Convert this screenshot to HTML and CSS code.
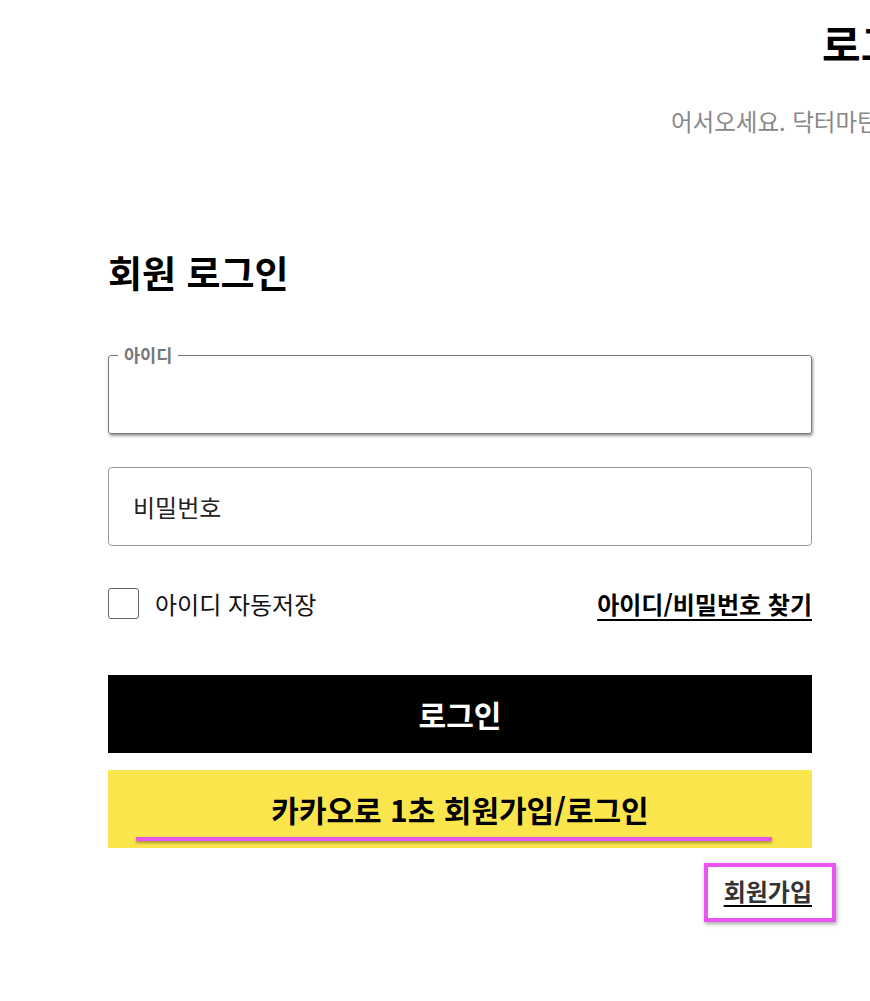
FILE: index.html
```html
<!DOCTYPE html>
<html lang="ko">
<head>
<meta charset="utf-8">
<title>로그인</title>
<link rel="stylesheet" href="styles.css">
</head>
<body>
<div class="viewport">
  <header class="page-head">
    <h1 class="page-title">로그인</h1>
    <p class="page-sub">어서오세요. 닥터마틴 온라인 스토어입니다.</p>
  </header>

  <main class="login">
    <h2 class="login-title">회원 로그인</h2>

    <fieldset class="field field-active">
      <legend class="field-legend">아이디</legend>
      <input class="field-input" type="text" aria-label="아이디">
    </fieldset>

    <div class="field field-plain">
      <span class="field-placeholder">비밀번호</span>
    </div>

    <div class="options">
      <label class="remember">
        <span class="checkbox"></span>
        <span class="remember-text">아이디 자동저장</span>
      </label>
      <a class="find-link" href="#">아이디/비밀번호 찾기</a>
    </div>

    <button class="btn btn-login" type="button">로그인</button>
    <button class="btn btn-kakao" type="button">카카오로 1초 회원가입/로그인<span class="mark-line"></span></button>

    <div class="join-row">
      <a class="join-link" href="#">회원가입<span class="mark-box"></span></a>
    </div>
  </main>
</div>
</body>
</html>
```

FILE: styles.css
```css
html, body {
  margin: 0;
  padding: 0;
  background: #fff;
  overflow: hidden;
}
body {
  font-family: "Noto Sans CJK KR", "Noto Sans", sans-serif;
  color: #000;
}
.viewport {
  width: 870px;
  height: 1001px;
  overflow: hidden;
}
.page-head {
  width: 1764px;
  text-align: center;
  padding-top: 14px;
}
.page-title {
  margin: 0;
  font-size: 42px;
  font-weight: 700;
  line-height: 58px;
  padding-right: 4px;
}
.page-sub {
  margin: 33px 0 0;
  font-size: 23.5px;
  line-height: 32px;
  color: #888;
}
.login {
  width: 704px;
  margin: 0 0 0 108px;
  padding-top: 109px;
}
.login-title {
  margin: 0 0 48px;
  font-size: 37px;
  font-weight: 700;
  line-height: 52px;
}
.field {
  box-sizing: border-box;
  width: 704px;
}
.field-active {
  margin: 0;
  padding: 0;
  min-width: 0;
  height: 88px;
  border: 1px solid #777;
  border-radius: 3px;
  box-shadow: 1px 2px 3px rgba(0, 0, 0, 0.4);
}
.field-legend {
  margin-left: 9px;
  padding: 0 6px;
  font-size: 17.5px;
  font-weight: 700;
  line-height: 18px;
  color: #777;
}
.field-input {
  display: block;
  width: 100%;
  height: 62px;
  border: 0;
  outline: 0;
  background: transparent;
  box-sizing: border-box;
}
.field-plain {
  margin-top: 33px;
  height: 79px;
  border: 1px solid #999;
  border-radius: 4px;
  display: flex;
  align-items: center;
  padding-left: 24px;
}
.field-placeholder {
  font-size: 24px;
  color: #222;
}
.options {
  margin-top: 41px;
  height: 32px;
  display: flex;
  align-items: center;
  justify-content: space-between;
}
.remember {
  display: flex;
  align-items: center;
  gap: 16px;
}
.checkbox {
  box-sizing: border-box;
  width: 31px;
  height: 31px;
  border: 1.5px solid #666;
  border-radius: 3px;
}
.remember-text {
  font-size: 24px;
  color: #111;
}
.find-link {
  font-size: 24px;
  font-weight: 700;
  color: #000;
  text-decoration: underline;
  text-decoration-thickness: 2px;
  text-underline-offset: 5px;
}
.btn {
  display: flex;
  align-items: center;
  justify-content: center;
  width: 704px;
  height: 78px;
  border: 0;
  margin: 0;
  padding: 0;
  font-family: inherit;
  font-weight: 700;
  font-size: 30px;
}
.btn-login {
  margin-top: 56px;
  background: #000;
  color: #fff;
}
.btn-kakao {
  position: relative;
  margin-top: 17px;
  background: #fbe54c;
  color: #000;
}
.mark-line {
  position: absolute;
  left: 28px;
  width: 636px;
  top: 67px;
  height: 4px;
  background: #ea55f1;
  box-shadow: 0 2px 3px rgba(0, 0, 0, 0.35);
}
.join-row {
  display: flex;
  justify-content: flex-end;
  margin-top: 25px;
}
.join-link {
  position: relative;
  font-size: 24px;
  font-weight: 700;
  color: #333;
  text-decoration: underline;
  text-decoration-color: #000;
  text-decoration-thickness: 2px;
  text-underline-offset: 4px;
}
.mark-box {
  position: absolute;
  left: -20px;
  right: -24px;
  top: -10px;
  bottom: -14px;
  border: 4px solid #ea55f1;
  box-shadow: 1px 2px 4px rgba(0, 0, 0, 0.35);
}
```
